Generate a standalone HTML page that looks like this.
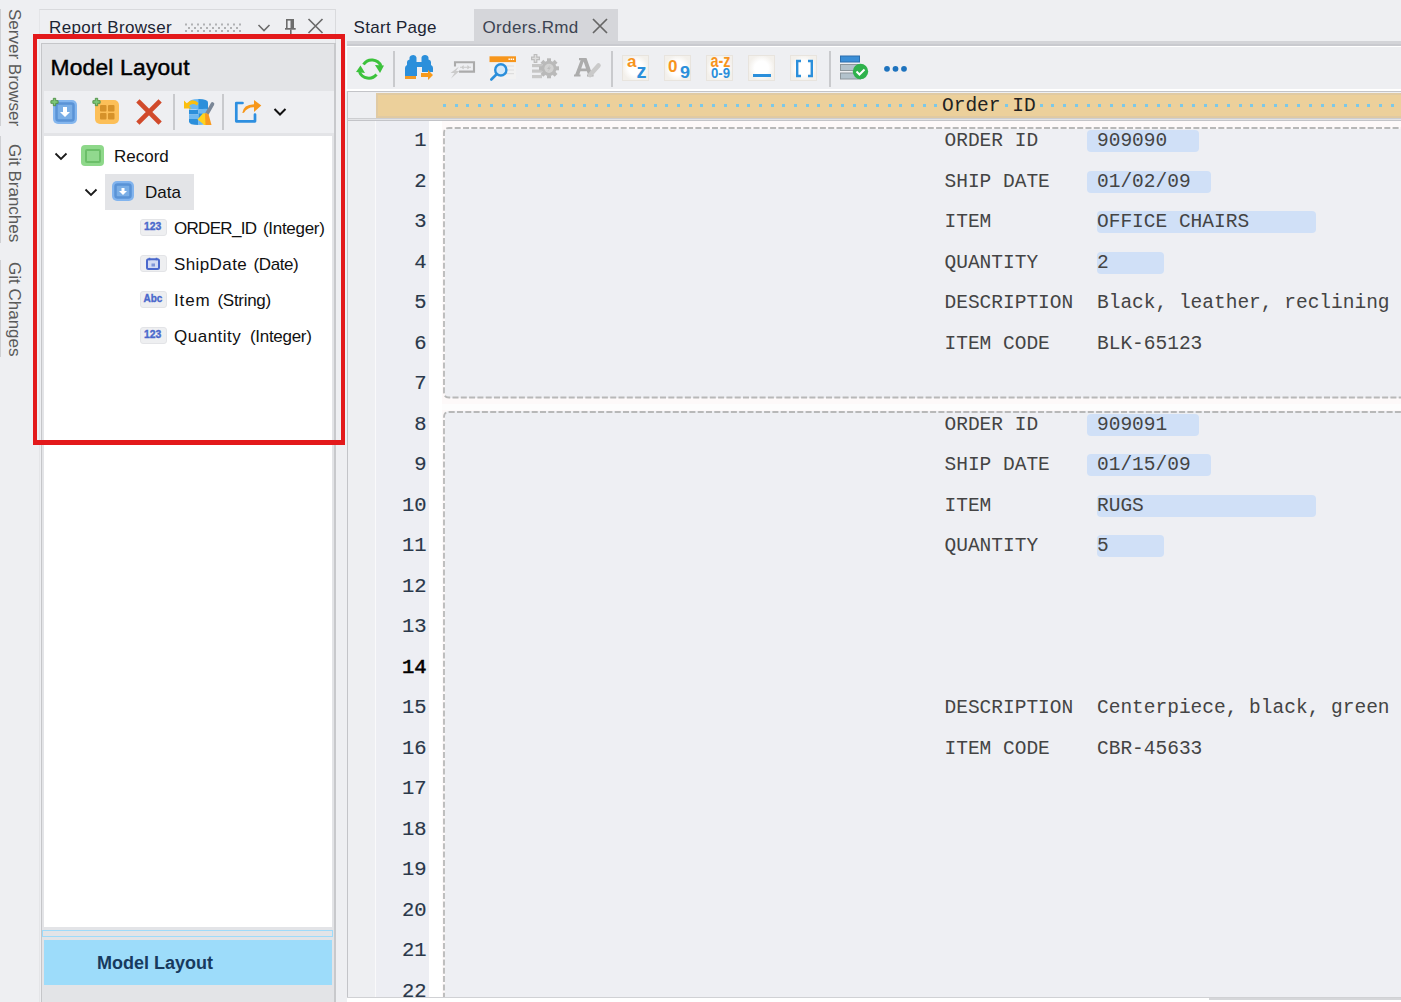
<!DOCTYPE html>
<html><head><meta charset="utf-8">
<style>
*{margin:0;padding:0;box-sizing:border-box}
html,body{width:1401px;height:1002px;overflow:hidden;background:#eeeff2;font-family:"Liberation Sans",sans-serif;position:relative}
.a{position:absolute}
.ui{font-family:"Liberation Sans",sans-serif;font-size:17px;white-space:pre;line-height:1}
.mono{font-family:"Liberation Mono",monospace;font-size:19.5px;white-space:pre;line-height:1;color:#444}
.vt{position:absolute;font-family:"Liberation Sans",sans-serif;font-size:17px;white-space:pre;line-height:1;color:#5a5a5a;transform-origin:0 0;transform:rotate(90deg)}
.ln{position:absolute;right:974.5px;font-family:"Liberation Mono",monospace;font-size:20.5px;line-height:1;color:#2a3849;-webkit-text-stroke:0.15px #2a3849;text-align:right}
.hl{position:absolute;background:#d0e0f7;border-radius:4px;height:22px}
.dot{position:absolute;width:3px;height:3px;background:#7cc8e8;top:104px}
</style></head><body>

<!-- left vertical tab strip -->
<div class="a" style="left:0;top:9px;width:1px;height:117px;background:#cfd0d3"></div>
<div class="a" style="left:0;top:136px;width:1px;height:107px;background:#cfd0d3"></div>
<div class="a" style="left:0;top:260px;width:1px;height:97px;background:#cfd0d3"></div>
<div class="vt" style="left:23px;top:9px">Server Browser</div>
<div class="vt" style="left:23px;top:144px">Git Branches</div>
<div class="vt" style="left:23px;top:262px">Git Changes</div>

<!-- Report Browser outer panel -->
<div class="a" style="left:39px;top:9px;width:297px;height:1000px;border:1px solid #d9dadd;border-left-color:#e4e5e8;background:#eeeff2"></div>
<div class="a ui" style="left:49px;top:19px;color:#1c2433;letter-spacing:0.35px">Report Browser</div>
<!-- grip -->
<svg class="a" style="left:185px;top:22px" width="60" height="12" fill="#b0b1b3"><rect x="0.0" y="1.5" width="2" height="2"/><rect x="0.0" y="8.0" width="2" height="2"/><rect x="6.0" y="1.5" width="2" height="2"/><rect x="6.0" y="8.0" width="2" height="2"/><rect x="12.0" y="1.5" width="2" height="2"/><rect x="12.0" y="8.0" width="2" height="2"/><rect x="18.0" y="1.5" width="2" height="2"/><rect x="18.0" y="8.0" width="2" height="2"/><rect x="24.0" y="1.5" width="2" height="2"/><rect x="24.0" y="8.0" width="2" height="2"/><rect x="30.0" y="1.5" width="2" height="2"/><rect x="30.0" y="8.0" width="2" height="2"/><rect x="36.0" y="1.5" width="2" height="2"/><rect x="36.0" y="8.0" width="2" height="2"/><rect x="42.0" y="1.5" width="2" height="2"/><rect x="42.0" y="8.0" width="2" height="2"/><rect x="48.0" y="1.5" width="2" height="2"/><rect x="48.0" y="8.0" width="2" height="2"/><rect x="54.0" y="1.5" width="2" height="2"/><rect x="54.0" y="8.0" width="2" height="2"/><rect x="3.0" y="5.0" width="2" height="2"/><rect x="9.0" y="5.0" width="2" height="2"/><rect x="15.0" y="5.0" width="2" height="2"/><rect x="21.0" y="5.0" width="2" height="2"/><rect x="27.0" y="5.0" width="2" height="2"/><rect x="33.0" y="5.0" width="2" height="2"/><rect x="39.0" y="5.0" width="2" height="2"/><rect x="45.0" y="5.0" width="2" height="2"/><rect x="51.0" y="5.0" width="2" height="2"/></svg>
<svg class="a" style="left:256px;top:22px" width="16" height="12"><path d="M2.5 3 L8 8.5 L13.5 3" fill="none" stroke="#6b6b6b" stroke-width="1.6"/></svg>
<svg class="a" style="left:283px;top:18px" width="14" height="18" fill="#6d6d6d"><rect x="3" y="1" width="1.6" height="9.5"/><rect x="3" y="1" width="8" height="1.6"/><rect x="7.5" y="1" width="3.5" height="9.5"/><rect x="2" y="10" width="10.7" height="1.7"/><rect x="7" y="11.5" width="1.6" height="5"/></svg>
<svg class="a" style="left:306px;top:17px" width="19" height="18"><path d="M2.5 2 L16.5 16 M16.5 2 L2.5 16" stroke="#6b6b6b" stroke-width="1.7"/></svg>

<!-- Inner Model Layout panel -->
<div class="a" style="left:41px;top:43px;width:295px;height:970px;border:1px solid #c5c6c9;background:#e3e4e7"></div>
<div class="a" style="left:334px;top:44px;width:2px;height:960px;background:#c8c9cc"></div>
<div class="a" style="left:50.5px;top:56px;font-size:22.8px;letter-spacing:0.2px;line-height:1;color:#000;white-space:pre;font-family:'Liberation Sans';-webkit-text-stroke:0.45px #000">Model Layout</div>
<div class="a" style="left:44px;top:91px;width:290px;height:42px;background:#eeeff2"></div>
<div class="a" style="left:44px;top:136px;width:288px;height:791px;background:#fff"></div>

<!-- panel toolbar icons -->
<svg class="a" style="left:50px;top:97px" width="28" height="28">
 <rect x="3" y="3" width="24" height="24" rx="5" fill="#84b6ee"/>
 <rect x="6.5" y="6.5" width="17" height="17" rx="2" fill="#7aaee6" stroke="#5a93d6" stroke-width="2.5"/>
 <path d="M13 10 h4 v5 h3 l-5 5 l-5 -5 h3 z" fill="#fff"/>
 <path d="M3.3 1.3 h2.4 v2.4 h2.4 v2.6 h-2.4 v2.4 h-2.4 v-2.4 h-2.4 v-2.6 h2.4 z" fill="#7cc878" stroke="#4f8f45" stroke-width="0.9"/>
</svg>
<svg class="a" style="left:92px;top:97px" width="28" height="28">
 <rect x="3" y="3" width="24" height="24" rx="5" fill="#fcbf58"/>
 <rect x="8" y="8" width="6.5" height="6.5" rx="1" fill="#d6922a"/>
 <rect x="16" y="8" width="6.5" height="6.5" rx="1" fill="#d6922a"/>
 <rect x="8" y="16" width="6.5" height="6.5" rx="1" fill="#d6922a"/>
 <rect x="16" y="16" width="6.5" height="6.5" rx="1" fill="#d6922a"/>
 <path d="M3.3 1.3 h2.4 v2.4 h2.4 v2.6 h-2.4 v2.4 h-2.4 v-2.4 h-2.4 v-2.6 h2.4 z" fill="#7cc878" stroke="#4f8f45" stroke-width="0.9"/>
</svg>
<svg class="a" style="left:135px;top:98px" width="28" height="28"><path d="M4.5 4.5 L23.5 23.5 M23.5 4.5 L4.5 23.5" stroke="#d14a2b" stroke-width="4.6" stroke-linecap="square"/></svg>
<div class="a" style="left:173px;top:94px;width:1.5px;height:36px;background:#c9cacd"></div>
<svg class="a" style="left:183px;top:97px" width="32" height="30">
 <defs><clipPath id="cyl"><path d="M6 5.5 Q6 2 15.5 2 Q25 2 25 5.5 V24.5 Q25 28 15.5 28 Q6 28 6 24.5 Z"/></clipPath></defs>
 <g clip-path="url(#cyl)">
  <rect x="5" y="1" width="11" height="11.5" fill="#6db8f1"/><rect x="15.5" y="1" width="11" height="11.5" fill="#2b8fdb"/>
  <path d="M5 12.5 Q10.5 13.5 15.5 12.5 V17 Q10.5 18 5 17z" fill="#2b8fdb"/><path d="M15.5 12.5 Q21 11.5 26 12 V16.5 Q21 17 15.5 17z" fill="#6db8f1"/>
  <path d="M5 17 Q10.5 18 15.5 17 V21.5 Q10.5 22.5 5 21.5z" fill="#6db8f1"/><rect x="15.5" y="16.5" width="11" height="5" fill="#2b8fdb"/>
  <path d="M5 21.5 Q10.5 22.5 15.5 21.5 V29 H5z" fill="#2b8fdb"/><rect x="15.5" y="21" width="11" height="8" fill="#6db8f1"/>
 </g>
 <path d="M1 3.5 V11.5 H8.5 L6 9 Q9.5 5.5 14 8.5 L15.5 6 Q9.5 0.5 3.8 6.2 Z" fill="#fbbf0e"/>
 <path d="M29.5 7 L23.5 17.5" stroke="#7b8797" stroke-width="3.6" stroke-linecap="round"/>
 <path d="M14.5 22.5 L20 16.2 L24 16.5 L24.5 28 L21 28 L19 26 Z" fill="#ffd21f"/>
 <path d="M22 16.5 L25.5 17 L28.5 28 L22.5 28 Z" fill="#f99a1f"/>
</svg>
<div class="a" style="left:222px;top:94px;width:1.5px;height:36px;background:#c9cacd"></div>
<svg class="a" style="left:233px;top:97px" width="30" height="28">
 <path d="M9.5 6 H3.3 V24.3 H22 V17.5" fill="none" stroke="#2d8fe0" stroke-width="2.7" stroke-linecap="round" stroke-linejoin="round"/>
 <path d="M9.3 16 q1 -8.5 11.7 -8.8 v-4.2 l7.3 5.6 l-7.3 6.5 v-4.8 q-6.5 -0.3 -10 5.5z" fill="#f7971a"/>
</svg>
<svg class="a" style="left:272px;top:106px" width="16" height="12"><path d="M2.5 3 L8 8.5 L13.5 3" fill="none" stroke="#111" stroke-width="2"/></svg>

<!-- tree -->
<svg class="a" style="left:54px;top:151px" width="14" height="11"><path d="M1.5 2.5 L7 8 L12.5 2.5" fill="none" stroke="#1a1a1a" stroke-width="1.8"/></svg>
<div class="a" style="left:81px;top:145px;width:23px;height:21px;border-radius:4px;background:#8ed88a;"></div>
<div class="a" style="left:84.5px;top:148.5px;width:16px;height:14px;border-radius:2px;background:#91d98e;border:2px solid #6cbf69"></div>
<div class="a ui" style="left:114px;top:148px;color:#111">Record</div>

<div class="a" style="left:105px;top:174px;width:89px;height:36px;background:#e3e4e7"></div>
<svg class="a" style="left:84px;top:187px" width="14" height="11"><path d="M1.5 2.5 L7 8 L12.5 2.5" fill="none" stroke="#1a1a1a" stroke-width="1.8"/></svg>
<svg class="a" style="left:111px;top:180px" width="24" height="22">
 <rect x="1" y="1" width="22" height="20" rx="5" fill="#82b4ee"/>
 <rect x="4.5" y="4.5" width="15" height="13" rx="2" fill="#7aaee6" stroke="#5a93d6" stroke-width="2.5"/>
 <path d="M10.5 8 h3 v3 h2.5 l-4 4 l-4 -4 h2.5 z" fill="#fff"/>
</svg>
<div class="a ui" style="left:145px;top:184px;color:#111">Data</div>

<!-- field rows -->
<div class="a" style="left:140px;top:219px;width:27px;height:17px;border-radius:3px;background:#eeeff1;border:1px solid #e3e4e7"></div>
<svg class="a" style="left:140px;top:219px" width="27" height="17"><text x="4" y="11.3" font-family="Liberation Sans" font-weight="bold" font-size="10.3" fill="#4a68cc" stroke="#4a68cc" stroke-width="0.35" textLength="17.3" lengthAdjust="spacingAndGlyphs">123</text></svg>
<div class="a ui" style="left:174px;top:220px;color:#111;letter-spacing:-0.7px">ORDER_ID</div><div class="a ui" style="left:263px;top:220px;color:#111;letter-spacing:-0.3px">(Integer)</div>

<div class="a" style="left:140px;top:255px;width:27px;height:17px;border-radius:3px;background:#eeeff1;border:1px solid #e3e4e7"></div>
<svg class="a" style="left:145px;top:256px" width="16" height="15"><rect x="2" y="3.3" width="12" height="9.7" rx="1.5" fill="#d3dbf3" stroke="#4a68cc" stroke-width="2"/><path d="M4.5 1.8 v2.5 M11.5 1.8 v2.5" stroke="#4a68cc" stroke-width="1.6"/><rect x="6.5" y="7.5" width="3.5" height="3" fill="#7f95d8"/></svg>
<div class="a ui" style="left:174px;top:256px;color:#111;letter-spacing:0.4px">ShipDate</div><div class="a ui" style="left:253.5px;top:256px;color:#111;letter-spacing:-0.4px">(Date)</div>

<div class="a" style="left:140px;top:291px;width:27px;height:17px;border-radius:3px;background:#eeeff1;border:1px solid #e3e4e7"></div>
<svg class="a" style="left:140px;top:291px" width="27" height="17"><text x="3.5" y="11.3" font-family="Liberation Sans" font-weight="bold" font-size="10.3" fill="#4a68cc" stroke="#4a68cc" stroke-width="0.35" textLength="18.8" lengthAdjust="spacingAndGlyphs">Abc</text></svg>
<div class="a ui" style="left:174px;top:292px;color:#111;letter-spacing:0.9px">Item</div><div class="a ui" style="left:217.5px;top:292px;color:#111;letter-spacing:-0.3px">(String)</div>

<div class="a" style="left:140px;top:327px;width:27px;height:17px;border-radius:3px;background:#eeeff1;border:1px solid #e3e4e7"></div>
<svg class="a" style="left:140px;top:327px" width="27" height="17"><text x="4" y="11.3" font-family="Liberation Sans" font-weight="bold" font-size="10.3" fill="#4a68cc" stroke="#4a68cc" stroke-width="0.35" textLength="17.3" lengthAdjust="spacingAndGlyphs">123</text></svg>
<div class="a ui" style="left:174px;top:328px;color:#111;letter-spacing:0.5px">Quantity</div><div class="a ui" style="left:250px;top:328px;color:#111;letter-spacing:-0.3px">(Integer)</div>

<!-- bottom splitter + button -->
<div class="a" style="left:42px;top:930px;width:291px;height:7px;border:1px solid #9edbfa;background:#e3e4e7"></div>
<div class="a" style="left:44px;top:940px;width:288px;height:45px;background:#9ddcfa"></div>
<div class="a" style="left:97px;top:954px;font:bold 18px 'Liberation Sans';line-height:1;color:#173a5e;white-space:pre">Model Layout</div>

<!-- RED HIGHLIGHT BOX -->
<div class="a" style="left:33px;top:34px;width:312px;height:411px;border-left:4px solid #e3191b;border-right:4px solid #e3191b;border-top:5px solid #e3191b;border-bottom:5px solid #e3191b"></div>

<!-- EDITOR -->
<div class="a ui" style="left:353.5px;top:18.5px;color:#1c2433;letter-spacing:0.3px">Start Page</div>
<div class="a" style="left:474px;top:9px;width:144px;height:33px;background:#d5d6da"></div>
<div class="a ui" style="left:482.5px;top:18.5px;color:#3c4452;letter-spacing:0.35px">Orders.Rmd</div>
<svg class="a" style="left:591px;top:17px" width="18" height="18"><path d="M2 2 L16 16 M16 2 L2 16" stroke="#666" stroke-width="1.7"/></svg>
<div class="a" style="left:347px;top:41px;width:1054px;height:5px;background:#d3d4d8"></div>
<div class="a" style="left:347px;top:44px;width:1054px;height:1.5px;background:#c9cacf"></div>
<div class="a" style="left:347px;top:46px;width:1054px;height:1px;background:#fff"></div>
<!-- editor frame -->
<div class="a" style="left:346px;top:46px;width:1px;height:45px;background:#fff"></div>
<div class="a" style="left:347px;top:91px;width:1px;height:907px;background:#c3c4c8"></div>
<div class="a" style="left:347px;top:47px;width:1054px;height:42px;background:#eeeff2"></div>
<div class="a" style="left:347px;top:89px;width:1054px;height:2px;background:#fff"></div>

<!-- editor toolbar icons -->
<svg class="a" style="left:355px;top:55px" width="30" height="28">
 <path d="M8.5 9.5 A10 10 0 0 1 26 11" fill="none" stroke="#3cc23c" stroke-width="3"/>
 <path d="M21.5 19.5 A10 10 0 0 1 4.5 17" fill="none" stroke="#3cc23c" stroke-width="3"/>
 <path d="M20 10 L29 10.5 L25 18z" fill="#3cc23c"/>
 <path d="M1 17 L10 18 L5.5 10.5z" fill="#3cc23c"/>
</svg>
<div class="a" style="left:393px;top:51px;width:1.5px;height:36px;background:#c9cacd"></div>
<svg class="a" style="left:404px;top:54px" width="30" height="27">
 <path d="M1 22 V14 Q1 12 3 11 V8 Q3 6 5.5 5.5 V3.5 Q6 1 9.5 1 Q12 1 12.5 3.5 V8 H17.5 V3.5 Q18 1 21 1 Q24 1 24.5 3.5 V5.5 Q27 6 27 8 V11 Q29 12 29 14 V18 H18 V13 H13 V22z" fill="#2b8fdb"/>
 <rect x="1" y="22" width="11" height="3" fill="#f29a26"/>
 <path d="M17 19 H24 V16 L29 21 L24 26 V23 H17z" fill="#f79a1b"/>
</svg>
<svg class="a" style="left:448px;top:58px" width="30" height="22">
 <path d="M7 8.5 V4.2 H26 V13.6 H11" fill="none" stroke="#ababab" stroke-width="2.1"/>
 <path d="M12 9.3 H23 M14 9.3 l1.6 -1.6 M14 9.3 l1.6 1.6 M21 9.3 l-1.6 -1.6 M21 9.3 l-1.6 1.6" stroke="#c9c9c9" stroke-width="1.1"/>
 <path d="M11 8.5 L2.5 15 L6.5 15 L3 20.5 L11.5 13 L8 13 Z" fill="#cbcbcb"/>
</svg>
<svg class="a" style="left:488px;top:55px" width="30" height="28">
 <rect x="1.5" y="7" width="26.5" height="17" fill="#f2f2f2"/>
 <rect x="1.5" y="1.3" width="26.5" height="5.8" fill="#f7961c"/>
 <path d="M20.5 4.2 h6" stroke="#fff" stroke-width="1.6" stroke-dasharray="1.4 0.7"/>
 <path d="M18 11 h8 M18 15 h8 M18 18.7 h8" stroke="#dedede" stroke-width="1.2"/>
 <circle cx="12.8" cy="14.9" r="5.6" fill="#d6eafa" stroke="#2b8fdb" stroke-width="2.4"/>
 <path d="M8.6 19.3 L3.3 24.5" stroke="#2b8fdb" stroke-width="2.6" stroke-linecap="round"/>
</svg>
<svg class="a" style="left:530px;top:53px" width="30" height="28">
 <path d="M4.2 1.5 h2.6 v2.6 h2.6 v2.6 h-2.6 v2.6 h-2.6 v-2.6 h-2.6 v-2.6 h2.6 z" fill="#dedede" stroke="#bdbdbd" stroke-width="1.2"/>
 <rect x="2" y="11" width="10" height="3.2" fill="#c6c6c6"/><rect x="2" y="16.5" width="10" height="3.2" fill="#c6c6c6"/><rect x="2" y="22" width="10" height="3.2" fill="#c9c9c9"/>
 <g fill="#b9b9b9"><rect x="17" y="5.3" width="4" height="3" transform="rotate(0 19 15.3)"/><rect x="17" y="5.3" width="4" height="3" transform="rotate(45 19 15.3)"/><rect x="17" y="5.3" width="4" height="3" transform="rotate(90 19 15.3)"/><rect x="17" y="5.3" width="4" height="3" transform="rotate(135 19 15.3)"/><rect x="17" y="5.3" width="4" height="3" transform="rotate(180 19 15.3)"/><rect x="17" y="5.3" width="4" height="3" transform="rotate(225 19 15.3)"/><rect x="17" y="5.3" width="4" height="3" transform="rotate(270 19 15.3)"/><rect x="17" y="5.3" width="4" height="3" transform="rotate(315 19 15.3)"/><circle cx="19" cy="15.3" r="7.6"/></g>
 <circle cx="19" cy="15.3" r="4.6" fill="#d2d2d2"/>
 <path d="M20.5 11.5 L17 16 L19 16 L17.5 19 L21 14.5 L19 14.5z" fill="#bdbdbd"/>
</svg>
<svg class="a" style="left:570px;top:52px" width="36" height="30">
 <path fill-rule="evenodd" fill="#acacac" d="M9 6 H16.5 L22.3 22.5 H23.5 V24.6 H17 V22.5 H18 L16.9 19.2 H10.4 L9.3 22.5 H10.5 V24.6 H4 V22.5 H5.2 L10.6 8.2 H9 Z M11.2 16.6 H16 L13.6 9.6 Z"/>
 <path d="M20 23 L28.5 13.5" stroke="#cacaca" stroke-width="4.6" stroke-linecap="round"/>
 <path d="M17.5 25 L20 21.5 L22.5 23.5z" fill="#cacaca"/>
</svg>
<div class="a" style="left:611px;top:51px;width:1.5px;height:36px;background:#c9cacd"></div>

<!-- sort icons -->
<div class="a" style="left:622px;top:55px;width:27px;height:26px;background:radial-gradient(circle at 50% 50%,#fff 40%,#f3f0eb 75%);border:1px solid #e8e4de"></div>
<div class="a" style="left:664px;top:55px;width:27px;height:26px;background:radial-gradient(circle at 50% 50%,#fff 40%,#f3f0eb 75%);border:1px solid #e8e4de"></div>
<div class="a" style="left:706px;top:55px;width:27px;height:26px;background:radial-gradient(circle at 50% 50%,#fff 40%,#f3f0eb 75%);border:1px solid #e8e4de"></div>
<div class="a" style="left:748px;top:55px;width:27px;height:26px;background:radial-gradient(circle at 50% 50%,#fff 40%,#f3f0eb 75%);border:1px solid #e8e4de"></div>
<div class="a" style="left:753px;top:74px;width:18px;height:3px;background:#2b8fdb"></div>
<svg class="a" style="left:600px;top:50px" width="150" height="36" font-family="Liberation Sans" font-weight="bold">
 <text x="27" y="17" font-size="17" fill="#f7941d" textLength="9.5" lengthAdjust="spacingAndGlyphs">a</text>
 <text x="36.5" y="28" font-size="21" fill="#2b8fdb" textLength="10" lengthAdjust="spacingAndGlyphs">z</text>
 <text x="68" y="22" font-size="17" fill="#f7941d" textLength="9.5" lengthAdjust="spacingAndGlyphs">0</text>
 <text x="80" y="28" font-size="17" fill="#2b8fdb" textLength="10" lengthAdjust="spacingAndGlyphs">9</text>
 <text x="110.5" y="17" font-size="18" fill="#f7941d" textLength="20" lengthAdjust="spacingAndGlyphs">a-z</text>
 <text x="111" y="28" font-size="15" fill="#2b8fdb" textLength="19" lengthAdjust="spacingAndGlyphs">0-9</text>
</svg>

<div class="a" style="left:790px;top:55px;width:27px;height:26px;background:radial-gradient(circle at 50% 50%,#fff 40%,#f3f0eb 75%);border:1px solid #e8e4de"></div>
<svg class="a" style="left:794px;top:58px" width="22" height="22"><path d="M7 3 H3.2 V18 H7 M14 3 H17.8 V18 H14" fill="none" stroke="#2b8fdb" stroke-width="2.4"/></svg>
<div class="a" style="left:829px;top:51px;width:1.5px;height:36px;background:#c9cacd"></div>

<svg class="a" style="left:838px;top:54px" width="32" height="28">
 <rect x="2.5" y="2" width="19" height="6" fill="#3b8ed6" stroke="#2c6fae" stroke-width="1"/>
 <rect x="2.5" y="10.5" width="20" height="6" fill="#b3c2cc" stroke="#8d969c" stroke-width="1"/>
 <rect x="2.5" y="19" width="20" height="6" fill="#b3c2cc" stroke="#8d969c" stroke-width="1"/>
 <circle cx="22.5" cy="17.5" r="7.7" fill="#2fb24c"/>
 <path d="M18.5 17.5 l3 3 l5 -5" fill="none" stroke="#fff" stroke-width="2"/>
</svg>
<svg class="a" style="left:882px;top:64px" width="28" height="10"><circle cx="5" cy="4.8" r="2.9" fill="#1e73be"/><circle cx="13.5" cy="4.8" r="2.9" fill="#1e73be"/><circle cx="22" cy="4.8" r="2.9" fill="#1e73be"/></svg>

<!-- ruler -->
<div class="a" style="left:347px;top:91px;width:1054px;height:1px;background:#c3c4c8"></div>
<div class="a" style="left:348px;top:92px;width:1053px;height:26px;background:#eeeff2"></div>
<div class="a" style="left:376px;top:93px;width:1025px;height:25px;background:#ecd09b;border:2px solid #e0caa3;border-right:0"></div>
<div class="a" style="left:348px;top:118px;width:1053px;height:1px;background:#cdced1"></div>
<div class="a" style="left:348px;top:119px;width:1053px;height:1px;background:#e3e4e7"></div>
<div class="a" style="left:348px;top:120px;width:1053px;height:1px;background:#c3c4c8"></div>
<div class="dot" style="left:443.00px"></div>
<div class="dot" style="left:454.70px"></div>
<div class="dot" style="left:466.40px"></div>
<div class="dot" style="left:478.10px"></div>
<div class="dot" style="left:489.80px"></div>
<div class="dot" style="left:501.50px"></div>
<div class="dot" style="left:513.20px"></div>
<div class="dot" style="left:524.90px"></div>
<div class="dot" style="left:536.60px"></div>
<div class="dot" style="left:548.30px"></div>
<div class="dot" style="left:560.00px"></div>
<div class="dot" style="left:571.70px"></div>
<div class="dot" style="left:583.40px"></div>
<div class="dot" style="left:595.10px"></div>
<div class="dot" style="left:606.80px"></div>
<div class="dot" style="left:618.50px"></div>
<div class="dot" style="left:630.20px"></div>
<div class="dot" style="left:641.90px"></div>
<div class="dot" style="left:653.60px"></div>
<div class="dot" style="left:665.30px"></div>
<div class="dot" style="left:677.00px"></div>
<div class="dot" style="left:688.70px"></div>
<div class="dot" style="left:700.40px"></div>
<div class="dot" style="left:712.10px"></div>
<div class="dot" style="left:723.80px"></div>
<div class="dot" style="left:735.50px"></div>
<div class="dot" style="left:747.20px"></div>
<div class="dot" style="left:758.90px"></div>
<div class="dot" style="left:770.60px"></div>
<div class="dot" style="left:782.30px"></div>
<div class="dot" style="left:794.00px"></div>
<div class="dot" style="left:805.70px"></div>
<div class="dot" style="left:817.40px"></div>
<div class="dot" style="left:829.10px"></div>
<div class="dot" style="left:840.80px"></div>
<div class="dot" style="left:852.50px"></div>
<div class="dot" style="left:864.20px"></div>
<div class="dot" style="left:875.90px"></div>
<div class="dot" style="left:887.60px"></div>
<div class="dot" style="left:899.30px"></div>
<div class="dot" style="left:911.00px"></div>
<div class="dot" style="left:922.70px"></div>
<div class="dot" style="left:934.40px"></div>
<div class="dot" style="left:1004.60px"></div>
<div class="dot" style="left:1039.70px"></div>
<div class="dot" style="left:1051.40px"></div>
<div class="dot" style="left:1063.10px"></div>
<div class="dot" style="left:1074.80px"></div>
<div class="dot" style="left:1086.50px"></div>
<div class="dot" style="left:1098.20px"></div>
<div class="dot" style="left:1109.90px"></div>
<div class="dot" style="left:1121.60px"></div>
<div class="dot" style="left:1133.30px"></div>
<div class="dot" style="left:1145.00px"></div>
<div class="dot" style="left:1156.70px"></div>
<div class="dot" style="left:1168.40px"></div>
<div class="dot" style="left:1180.10px"></div>
<div class="dot" style="left:1191.80px"></div>
<div class="dot" style="left:1203.50px"></div>
<div class="dot" style="left:1215.20px"></div>
<div class="dot" style="left:1226.90px"></div>
<div class="dot" style="left:1238.60px"></div>
<div class="dot" style="left:1250.30px"></div>
<div class="dot" style="left:1262.00px"></div>
<div class="dot" style="left:1273.70px"></div>
<div class="dot" style="left:1285.40px"></div>
<div class="dot" style="left:1297.10px"></div>
<div class="dot" style="left:1308.80px"></div>
<div class="dot" style="left:1320.50px"></div>
<div class="dot" style="left:1332.20px"></div>
<div class="dot" style="left:1343.90px"></div>
<div class="dot" style="left:1355.60px"></div>
<div class="dot" style="left:1367.30px"></div>
<div class="dot" style="left:1379.00px"></div>
<div class="dot" style="left:1390.70px"></div>
<div class="a mono" style="left:942px;top:96.5px;color:#222">Order ID</div>

<!-- gutter -->
<div class="a" style="left:348px;top:121px;width:27px;height:876px;background:#eeeff2"></div>
<div class="a" style="left:375px;top:121px;width:1px;height:876px;background:#f9f9fa"></div>
<div class="a" style="left:376px;top:121px;width:53px;height:876px;background:#edeef3"></div>
<div class="a" style="left:429px;top:121px;width:13px;height:876px;background:#fff"></div>
<div class="a" style="left:442px;top:121px;width:959px;height:876px;background:#fdf9f9"></div>
<div class="a" style="left:442px;top:404px;width:959px;height:6px;background:#fdfdfd"></div>

<div class="ln" style="top:131.00px;">1</div>
<div class="ln" style="top:171.50px;">2</div>
<div class="ln" style="top:212.00px;">3</div>
<div class="ln" style="top:252.50px;">4</div>
<div class="ln" style="top:293.00px;">5</div>
<div class="ln" style="top:333.50px;">6</div>
<div class="ln" style="top:374.00px;">7</div>
<div class="ln" style="top:414.50px;">8</div>
<div class="ln" style="top:455.00px;">9</div>
<div class="ln" style="top:495.50px;">10</div>
<div class="ln" style="top:536.00px;">11</div>
<div class="ln" style="top:576.50px;">12</div>
<div class="ln" style="top:617.00px;">13</div>
<div class="ln" style="top:657.50px;color:#000;-webkit-text-stroke:0.6px #000;">14</div>
<div class="ln" style="top:698.00px;">15</div>
<div class="ln" style="top:738.50px;">16</div>
<div class="ln" style="top:779.00px;">17</div>
<div class="ln" style="top:819.50px;">18</div>
<div class="ln" style="top:860.00px;">19</div>
<div class="ln" style="top:900.50px;">20</div>
<div class="ln" style="top:941.00px;">21</div>
<div class="ln" style="top:981.50px;">22</div>

<!-- boxes -->
<div class="a" style="left:445px;top:129px;width:956px;height:269px;background:#eeeff3;border-radius:4px 0 0 4px"></div>
<div class="a" style="left:445px;top:411px;width:956px;height:590px;background:#eeeff3;border-radius:4px 0 0 0"></div>
<svg class="a" style="left:443px;top:127px" width="959" height="876">
 <path d="M970 270.5 H6 Q1 270.5 1 265.5 V6 Q1 1 6 1 H970" fill="none" stroke="#b8b8b8" stroke-width="1.8" stroke-dasharray="6 2.3"/>
 <path d="M1 880 V290 Q1 285 6 285 H970" fill="none" stroke="#b8b8b8" stroke-width="1.8" stroke-dasharray="6 2.3"/>
</svg>

<!-- highlight boxes -->
<div class="hl" style="left:1087px;top:130px;width:112px"></div>
<div class="hl" style="left:1087px;top:171px;width:124px"></div>
<div class="hl" style="left:1097px;top:211px;width:219px"></div>
<div class="hl" style="left:1097px;top:252px;width:67px"></div>
<div class="hl" style="left:1087px;top:414px;width:112px"></div>
<div class="hl" style="left:1087px;top:454px;width:124px"></div>
<div class="hl" style="left:1097px;top:495px;width:219px"></div>
<div class="hl" style="left:1097px;top:535px;width:67px"></div>

<div class="a mono" style="left:944.5px;top:132.20px">ORDER ID</div><div class="a mono" style="left:1097px;top:132.20px">909090</div>
<div class="a mono" style="left:944.5px;top:172.70px">SHIP DATE</div><div class="a mono" style="left:1097px;top:172.70px">01/02/09</div>
<div class="a mono" style="left:944.5px;top:213.20px">ITEM</div><div class="a mono" style="left:1097px;top:213.20px">OFFICE CHAIRS</div>
<div class="a mono" style="left:944.5px;top:253.70px">QUANTITY</div><div class="a mono" style="left:1097px;top:253.70px">2</div>
<div class="a mono" style="left:944.5px;top:294.20px">DESCRIPTION</div><div class="a mono" style="left:1097px;top:294.20px">Black, leather, reclining</div>
<div class="a mono" style="left:944.5px;top:334.70px">ITEM CODE</div><div class="a mono" style="left:1097px;top:334.70px">BLK-65123</div>
<div class="a mono" style="left:944.5px;top:415.70px">ORDER ID</div><div class="a mono" style="left:1097px;top:415.70px">909091</div>
<div class="a mono" style="left:944.5px;top:456.20px">SHIP DATE</div><div class="a mono" style="left:1097px;top:456.20px">01/15/09</div>
<div class="a mono" style="left:944.5px;top:496.70px">ITEM</div><div class="a mono" style="left:1097px;top:496.70px">RUGS</div>
<div class="a mono" style="left:944.5px;top:537.20px">QUANTITY</div><div class="a mono" style="left:1097px;top:537.20px">5</div>
<div class="a mono" style="left:944.5px;top:699.20px">DESCRIPTION</div><div class="a mono" style="left:1097px;top:699.20px">Centerpiece, black, green</div>
<div class="a mono" style="left:944.5px;top:739.70px">ITEM CODE</div><div class="a mono" style="left:1097px;top:739.70px">CBR-45633</div>

<!-- bottom border -->
<div class="a" style="left:347px;top:997px;width:1054px;height:1.5px;background:#d0d1d4"></div>
<div class="a" style="left:347px;top:998px;width:1054px;height:4px;background:#fff"></div>
<div class="a" style="left:1209px;top:998px;width:192px;height:2px;background:#d5d6d9"></div>


</body></html>
